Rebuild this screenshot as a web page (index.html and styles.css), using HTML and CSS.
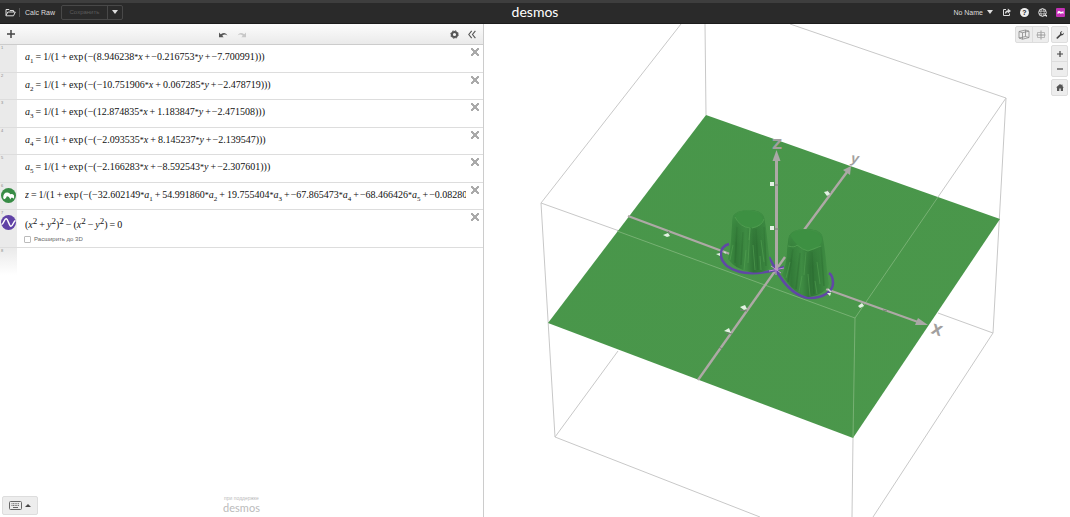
FILE: index.html
```html
<!DOCTYPE html>
<html lang="ru">
<head>
  <meta charset="UTF-8">
  <title>Calc Raw | Desmos</title>
  <link rel="stylesheet" href="styles.css">
</head>
<body>
  <header class="header">
    <div class="header-left">
      <button class="icon-btn" aria-label="Open">
        <svg width="11" height="9" viewBox="0 0 11 9" fill="none" stroke="#ddd" stroke-width="1"><path d="M1 7.5V1.5h3l1 1h3.500v1.500M1 7.500l1.800-3.500h7.500L8.500 7.800H1z"/></svg>
      </button>
      <span class="divider"></span>
      <span class="title">Calc Raw</span>
      <div class="save-group">
        <button class="save" disabled>Сохранить</button>
        <button class="save-more" aria-label="More"><svg width="6" height="4" viewBox="0 0 6 4"><path d="M0 0h6L3 4z" fill="#ddd"/></svg></button>
      </div>
    </div>
    <a class="logo" href="#">desmos</a>
    <div class="header-right">
      <button class="account">No Name <svg width="6" height="4" viewBox="0 0 6 4"><path d="M0 0h6L3 4z" fill="#ddd"/></svg></button>
      <button class="icon-btn" aria-label="Share">
        <svg width="9" height="9" viewBox="0 0 9 9" fill="none" stroke="#ddd"><path d="M4 1.500H1.500v6h6V5.500"/><path d="M3.500 5.500Q3.800 3 6.500 3" stroke-width="1.300"/><path d="M5.800.5L9 3 5.800 5.500z" fill="#ddd" stroke="none"/></svg>
      </button>
      <button class="icon-btn help" aria-label="Help">?</button>
      <button class="icon-btn" aria-label="Language">
        <svg width="9" height="9" viewBox="0 0 9 9" fill="none" stroke="#ddd"><circle cx="4.500" cy="4.500" r="3.800"/><ellipse cx="4.500" cy="4.500" rx="1.700" ry="3.800" stroke-width=".7"/><path d="M1 3.200h7M1 5.800h7" stroke-width=".7"/><path d="M5.500 7h3.500v2z" fill="#ddd" stroke="none"/></svg>
      </button>
      <button class="icon-btn" aria-label="Desmos 3D">
        <svg width="9" height="9" viewBox="0 0 9 9"><rect width="9" height="9" rx="1" fill="#c332b5"/><path d="M1.500 6V4Q2 2.500 4 3.200L5 4 7.500 3.200V6L6 5 5 6 3.500 5z" fill="#fff"/></svg>
      </button>
    </div>
  </header>

  <main class="main">
    <section class="panel">
      <div class="toolbar">
        <button class="icon-btn" aria-label="Add item"><svg width="8" height="8" viewBox="0 0 8 8"><path d="M4 0v8M0 4h8" stroke="#444" stroke-width="1.500"/></svg></button>
        <div class="tools">
          <button class="icon-btn" aria-label="Undo"><svg width="9" height="7" viewBox="0 0 9 7"><path d="M0 1.500V6.200h4.700L3.200 4.700Q5.500 2.500 8.500 4.500 6.500.2 1.700 3.200z" fill="#555"/></svg></button>
          <button class="icon-btn" aria-label="Redo"><svg width="9" height="7" viewBox="0 0 9 7"><path d="M9 1.500V6.200H4.300L5.800 4.700Q3.500 2.500.5 4.500 2.500.2 7.300 3.200z" fill="#c8c8c8"/></svg></button>
        </div>
        <div class="tools">
          <button class="icon-btn" aria-label="Settings"><svg width="9" height="9" viewBox="0 0 9 9" fill="none" stroke="#555"><circle cx="4.500" cy="4.500" r="2.600" stroke-width="2"/><circle cx="4.500" cy="4.500" r="3.800" stroke-width="1" stroke-dasharray="1.500 1.480"/></svg></button>
          <button class="icon-btn" aria-label="Hide list"><svg width="8" height="9" viewBox="0 0 8 9" fill="none" stroke="#555" stroke-width="1.100"><path d="M3.700.8L.8 4.500l2.900 3.700M7.400.8L4.500 4.500l2.900 3.700"/></svg></button>
        </div>
      </div>

      <ol class="list">
        <li class="row">
          <div class="gutter"><span class="num">1</span></div>
          <div class="math"><i>a</i><sub>1</sub><b>=</b>1/(1<b>+</b>exp<s></s>(−(8.946238<em>*</em><i>x</i><b>+</b><u>−</u>0.216753<em>*</em><i>y</i><b>+</b><u>−</u>7.700991)))</div>
          <button class="close" aria-label="Delete"></button>
        </li>
        <li class="row">
          <div class="gutter"><span class="num">2</span></div>
          <div class="math"><i>a</i><sub>2</sub><b>=</b>1/(1<b>+</b>exp<s></s>(−(−10.751906<em>*</em><i>x</i><b>+</b>0.067285<em>*</em><i>y</i><b>+</b><u>−</u>2.478719)))</div>
          <button class="close" aria-label="Delete"></button>
        </li>
        <li class="row">
          <div class="gutter"><span class="num">3</span></div>
          <div class="math"><i>a</i><sub>3</sub><b>=</b>1/(1<b>+</b>exp<s></s>(−(12.874835<em>*</em><i>x</i><b>+</b>1.183847<em>*</em><i>y</i><b>+</b><u>−</u>2.471508)))</div>
          <button class="close" aria-label="Delete"></button>
        </li>
        <li class="row">
          <div class="gutter"><span class="num">4</span></div>
          <div class="math"><i>a</i><sub>4</sub><b>=</b>1/(1<b>+</b>exp<s></s>(−(−2.093535<em>*</em><i>x</i><b>+</b>8.145237<em>*</em><i>y</i><b>+</b><u>−</u>2.139547)))</div>
          <button class="close" aria-label="Delete"></button>
        </li>
        <li class="row">
          <div class="gutter"><span class="num">5</span></div>
          <div class="math"><i>a</i><sub>5</sub><b>=</b>1/(1<b>+</b>exp<s></s>(−(−2.166283<em>*</em><i>x</i><b>+</b><u>−</u>8.592543<em>*</em><i>y</i><b>+</b><u>−</u>2.307601)))</div>
          <button class="close" aria-label="Delete"></button>
        </li>
        <li class="row">
          <div class="gutter"><span class="num">6</span>
            <svg class="swatch" width="15" height="15" viewBox="0 0 14 14"><circle cx="7" cy="7" r="7" fill="#388c46"/><path d="M2 9.500Q2 4 6 4.200q1.800.3 2.800 1.600 2.200-.6 3.400 1.200v3.200Q11 8.500 9.500 9.200L8.800 10.800Q7.500 7.500 5.500 7.600 5 9 3.500 10.500z" fill="#fff"/></svg>
          </div>
          <div class="math"><i>z</i><b>=</b>1/(1<b>+</b>exp<s></s>(−(−32.602149<em>*</em><i>a</i><sub>1</sub><b>+</b>54.991860<em>*</em><i>a</i><sub>2</sub><b>+</b>19.755404<em>*</em><i>a</i><sub>3</sub><b>+</b><u>−</u>67.865473<em>*</em><i>a</i><sub>4</sub><b>+</b><u>−</u>68.466426<em>*</em><i>a</i><sub>5</sub><b>+</b><u>−</u>0.08280)))</div>
          <button class="close" aria-label="Delete"></button>
        </li>
        <li class="row tall">
          <div class="gutter"><span class="num">7</span>
            <svg class="swatch" width="15" height="15" viewBox="0 0 14 14"><circle cx="7" cy="7" r="7" fill="#6042a6"/><path d="M.5 9C2.500 8.500 3 3.500 4.800 3.500S7.500 10.500 9.300 10.500 11.500 6 13.500 5" fill="none" stroke="#fff" stroke-width="1.400"/></svg>
          </div>
          <div class="body">
            <div class="math">(<i>x</i><sup>2</sup><b>+</b><i>y</i><sup>2</sup>)<sup>2</sup><b>−</b>(<i>x</i><sup>2</sup><b>−</b><i>y</i><sup>2</sup>)<b>=</b>0</div>
            <label class="extend"><input type="checkbox">Расширить до 3D</label>
          </div>
          <button class="close" aria-label="Delete"></button>
        </li>
        <li class="row blank">
          <div class="gutter"><span class="num">8</span></div>
        </li>
      </ol>

      <div class="panel-footer">
        <button class="keypad" aria-label="Show keypad">
          <svg width="13" height="9" viewBox="0 0 13 9" fill="none" stroke="#666"><rect x=".5" y=".5" width="12" height="8" rx="1"/><path d="M2.500 2.700h8M2.500 4.500h8" stroke-dasharray="1 .6"/><path d="M4 6.500h5"/></svg>
          <svg width="6" height="3" viewBox="0 0 6 3"><path d="M0 3h6L3 0z" fill="#444"/></svg>
        </button>
        <div class="powered"><small>при поддержке</small><span>desmos</span></div>
      </div>
    </section>

    <section class="graph">
      <svg class="scene" viewBox="484 24 586 493" preserveAspectRatio="xMidYMid slice">
        <defs>
          <linearGradient id="plane" x1="0" y1="0" x2="1" y2="1">
            <stop offset="0" stop-color="#48964a"/>
            <stop offset="1" stop-color="#4b974b"/>
          </linearGradient>
          <linearGradient id="side">
            <stop offset="0" stop-color="#3f8f43"/>
            <stop offset=".2" stop-color="#327a38"/>
            <stop offset=".42" stop-color="#3f8c43"/>
            <stop offset=".6" stop-color="#2f7335"/>
            <stop offset=".82" stop-color="#37813c"/>
            <stop offset="1" stop-color="#439246"/>
          </linearGradient>
          <linearGradient id="fade" x1="0" y1="0" x2="0" y2="1">
            <stop offset="0" stop-color="#429446"/>
            <stop offset=".5" stop-color="#3c8a41" stop-opacity=".4"/>
            <stop offset="1" stop-color="#3c8a41" stop-opacity="0"/>
          </linearGradient>
        </defs>

        <!-- bounding box, behind the surface -->
        <g stroke="#c8c8c8" fill="none">
          <path d="M681 24L541 203L555 437L618 351M541 203L625 233"/>
          <path d="M705 24L706 115M790 24L1006 98L993 333L873 517M993 333L938 313M1006 98L938 197"/>
          <path d="M555 437L760 517M853 438L852 517"/>
        </g>

        <path d="M706 115L1000 219L853 438L548 323z" fill="url(#plane)"/>

        <g stroke="#83b77d" stroke-width=".8" fill="none">
          <path d="M617 231L855 318L938 197M855 318L853 438"/>
        </g>

        <!-- x and y axes -->
        <g stroke="#aea9a6" stroke-width="2.400" fill="none">
          <path d="M628 216L730 254"/>
          <path d="M698 380L785 257"/>
          <path d="M804 230L847 172"/>
          <path d="M826 289L918 322" stroke-width="2"/>
        </g>
        <path d="M851 166L850 175L843 170z" fill="#aaa8a6"/>
        <path d="M928 325L915 325L918 318z" fill="#aaa8a6"/>

        <!-- lemniscate -->
        <path d="M729 244C719 247 718 258 727 266C739 275 755 275 776 270C785 286 796 297 810 298C824 298 833 291 833 283C833 278 832 275 829 273M776 270L769 257M776 270L784 267" fill="none" stroke="#6048a5" stroke-width="2.600"/>

        <!-- left bump -->
        <path d="M733 216Q737 210 749 210Q761 210 764 217C767 230 768 252 771 268Q763 274 750 272Q735 269 728 259C732 245 731 229 733 216z" fill="url(#side)"/>
        <path d="M737 227L735 263M743 232L741 265M756 229L758 270M764 227L766 266" stroke="#25612b" stroke-width="1.500" opacity=".3"/>
        <path d="M750 228L748 263M746 250L744 270M753 245L755 270M761 240L764 262M733 245L730 260M760 256L761 270" stroke="#55a354" stroke-width="1" opacity=".6"/>
        <path d="M733 216Q737 210 749 210Q761 210 764 217L767 244Q750 249 731 240z" fill="url(#fade)"/>
        <path d="M735 216Q740 210 750 211Q761 212 763 219Q763 227 752 228Q740 227 735 216z" fill="#3d9042"/>
        <path d="M735 217Q740 227 750 228L749 240M752 228Q762 226 764 219" fill="none" stroke="#53a053" stroke-width="1" opacity=".8"/>

        <!-- right bump -->
        <path d="M789 236Q793 229 805 229Q819 229 822 235C826 250 826 268 829 284Q825 295 808 297Q793 293 782 275C788 262 786 250 789 236z" fill="url(#side)"/>
        <path d="M793 249L788 282M800 253L796 289M812 252L814 294M821 247L824 286" stroke="#25612b" stroke-width="1.500" opacity=".3"/>
        <path d="M806 252L804 275M790 262L786 278M802 276L799 292M808 274L810 296M817 262L820 284M815 281L817 294" stroke="#55a354" stroke-width="1" opacity=".55"/>
        <path d="M789 236Q793 229 805 229Q819 229 822 235L826 265Q807 270 787 257z" fill="url(#fade)"/>
        <path d="M790 235Q795 230 806 230Q818 231 822 238Q822 249 808 251Q797 248 790 235z" fill="#3d9042"/>
        <path d="M788 246Q795 248 797 245Q803 250 808 251L821 246" fill="none" stroke="#53a053" stroke-width="1" opacity=".8"/>

        <path d="M828 289l3 3M724 252l2 1" stroke="#cdd8cd" stroke-width="1.500"/>

        <!-- z axis -->
        <path d="M776.500 270V160" stroke="#aea9a6" stroke-width="3"/>
        <path d="M776.500 150L780.500 161H772.500z" fill="#aaa8a6"/>
        <path d="M769 271L784 268M771 266L781 273M776 264V275" stroke="#bd8fd0" stroke-width="1"/>

        <!-- tick labels -->
        <g fill="#e3f1e3">
          <path d="M770 182h4v4h-4zM770 226h4v4h-4z"/>
          <path d="M824 192l4-1 2 3-3 2zM663 235l5-2 2 3-3 1z"/>
          <path d="M716 254l4-1v3zM858 306l4-3 2 3-4 2zM827 293l4 0-1 3z"/>
          <path d="M740 307l5-2 2 4-3 1zM724 331l5-3 2 5z"/>
        </g>
        <path d="M774 185h5M774 229h5M827 190l4 3M668 231l2 3M740 310l7 1M726 333l6 1M883 310l4 1M719 347l3 2" stroke="#777f75" stroke-width="1"/>

        <g class="axis-names">
          <text x="777" y="149">Z</text>
          <text x="855" y="163" class="slim" transform="rotate(8 855 158)">y</text>
          <text x="937" y="335" transform="rotate(18 937 330)">X</text>
        </g>
      </svg>

      <div class="controls">
        <div class="group wide">
          <button aria-label="3D view"><svg width="12" height="11" viewBox="0 0 12 11" fill="none" stroke="#888" stroke-width=".8"><path d="M1 2.500L7.500 1 11 2.200V8.500L4.500 10.200 1 9zM1 2.500l3.500 1.200L11 2.200M4.500 3.700v6.500M7.500 1v6.500L1 9M7.500 7.500L11 8.500"/></svg></button>
          <button aria-label="XY view"><svg width="10" height="10" viewBox="0 0 10 10" fill="none" stroke="#888" stroke-width=".8"><path d="M5 .5v9M.5 5h9"/><path d="M1.500 2.500h7v5h-7z" stroke="#aaa"/></svg></button>
        </div>
        <div class="column">
          <div class="group"><button aria-label="Graph settings"><svg width="8" height="8" viewBox="0 0 8 8"><path d="M.5 6.500L4 3.200Q3.500 1 5.500.3L6.500.2 5.200 1.600 5.500 2.700 6.600 2.900 7.800 1.500Q8 4.500 5 4.400L1.700 7.700Q.2 8 .5 6.500z" fill="#444"/></svg></button></div>
          <div class="group">
            <button aria-label="Zoom in"><svg width="6" height="6" viewBox="0 0 6 6"><path d="M3 0v6M0 3h6" stroke="#444" stroke-width="1.200"/></svg></button>
            <button aria-label="Zoom out"><svg width="6" height="6" viewBox="0 0 6 6"><path d="M0 3h6" stroke="#444" stroke-width="1.200"/></svg></button>
          </div>
          <div class="group"><button aria-label="Default view"><svg width="8" height="7" viewBox="0 0 8 7"><path d="M4 0l1.500 1.300V.6h1v1.600L8 3.600H7V7H4.800V4.500H3.300V7H1V3.600H0z" fill="#555"/></svg></button></div>
        </div>
      </div>
    </section>
  </main>
</body>
</html>
```
FILE: styles.css
```css
* {
  box-sizing: border-box;
}
body {
  margin: 0;
  height: 100vh;
  display: flex;
  flex-direction: column;
  overflow: hidden;
  font-family: "Liberation Sans", Arial, sans-serif;
  font-size: 7px;
  background: #fff;
}
button {
  margin: 0;
  padding: 0;
  border: none;
  background: none;
  font: inherit;
  color: inherit;
  cursor: pointer;
  display: flex;
  align-items: center;
  justify-content: center;
}
svg {
  display: block;
}

/* header */
.header {
  flex: none;
  height: 24px;
  display: grid;
  grid-template-columns: 1fr auto 1fr;
  align-items: center;
  padding: 0 5px 2px;
  border-top: 3px solid #3e3e3e;
  border-bottom: 1px solid #1c1c1c;
  background: #2a2a2a;
  color: #ddd;
}
.header-left, .header-right {
  display: flex;
  align-items: center;
}
.header-right {
  justify-content: flex-end;
  gap: 9px;
}
.divider {
  width: 1px;
  height: 9px;
  margin: 0 5px 0 3px;
  background: #555;
}
.save-group {
  display: flex;
  height: 15px;
  margin-left: 6px;
  border: 1px solid #484848;
  border-radius: 2px;
}
.save {
  width: 45px;
  font-size: 6px;
  color: #5c5c5c;
}
.save-more {
  width: 15px;
  border-left: 1px solid #484848;
}
.logo {
  font-family: Lato, sans-serif;
  font-size: 14px;
  line-height: 16px;
  color: #fff;
  text-decoration: none;
}
.account {
  gap: 4px;
}
.help {
  width: 9px;
  height: 9px;
  border-radius: 50%;
  background: #eee;
  color: #222;
  font-weight: bold;
}

/* expression panel */
.main {
  flex: 1;
  min-height: 0;
  display: grid;
  grid-template-columns: 484fr 586fr;
}
.panel {
  min-width: 0;
  display: flex;
  flex-direction: column;
  border-right: 1px solid #ccc;
}
.toolbar {
  height: 21px;
  display: flex;
  justify-content: space-between;
  align-items: center;
  padding: 0 7px;
  border-bottom: 1px solid #ccc;
  background: linear-gradient(#fcfcfc, #eaeaea);
}
.tools {
  display: flex;
  align-items: center;
  gap: 9px;
}
.list {
  flex: 1;
  margin: 0;
  padding: 0;
  list-style: none;
}
.row {
  height: 28px;
  display: flex;
  border-bottom: 1px solid #ddd;
}
.row:nth-child(even) {
  height: 27px;
}
.row.tall {
  height: 38px;
}
.row.blank {
  border: none;
}
.gutter {
  flex: none;
  width: 17px;
  padding: 0 1px;
  background: #eaeaea;
}
.blank .gutter {
  background: linear-gradient(#eaeaea, #fff);
}
.num {
  display: block;
  height: 5px;
  font-size: 4px;
  line-height: 6px;
  color: #888;
}
.math {
  flex: 1;
  min-width: 0;
  margin-left: 8px;
  overflow: hidden;
  white-space: nowrap;
  font-family: "Liberation Serif", "Times New Roman", serif;
  font-size: 10px;
  line-height: 24px;
  color: #111;
}
.math b {
  margin: 0 2px;
  font-weight: normal;
}
.math s {
  margin-left: 1px;
}
.math u {
  margin-left: -1px;
  text-decoration: none;
}
.math em {
  font-size: 8px;
  font-style: normal;
}
.math sub, .math sup {
  font-size: 7px;
  line-height: 0;
}
.math sup {
  font-size: 9px;
}
.body {
  flex: 1;
}
.body .math {
  line-height: 30px;
  height: 25px;
}
.extend {
  display: flex;
  align-items: center;
  gap: 3px;
  margin-left: 7px;
  line-height: 9px;
  font-size: 6px;
  color: #666;
}
.extend input {
  appearance: none;
  width: 7px;
  height: 7px;
  margin: 0;
  border: 1px solid #bbb;
  border-radius: 1px;
}
.close {
  flex: none;
  width: 17px;
  height: 14px;
}
.close::before {
  content: "";
  width: 8px;
  height: 8px;
  background:
    linear-gradient(45deg, transparent 43%, #aaa 43% 57%, transparent 57%),
    linear-gradient(-45deg, transparent 43%, #aaa 43% 57%, transparent 57%);
}
.panel-footer {
  display: grid;
  grid-template-columns: 1fr auto 1fr;
  align-items: end;
  padding: 0 2px 2px;
}
.keypad {
  width: 36px;
  height: 19px;
  gap: 3px;
  border: 1px solid #ddd;
  border-radius: 2px;
  background: #ededed;
}
.powered {
  display: flex;
  flex-direction: column;
  align-items: center;
  color: #bbb;
}
.powered small {
  font-size: 5px;
  line-height: 5px;
}
.powered span {
  font-family: Lato, sans-serif;
  font-size: 11px;
  line-height: 14px;
}

/* 3D graph */
.graph {
  position: relative;
  min-width: 0;
  min-height: 0;
}
.scene {
  width: 100%;
  height: 100%;
}
.axis-names text {
  font-family: "DejaVu Sans", sans-serif;
  font-size: 14px;
  font-weight: bold;
  text-anchor: middle;
  fill: #a29f9e;
}
.axis-names .slim {
  font-family: "Liberation Sans", Arial, sans-serif;
  font-style: italic;
}
.controls {
  position: absolute;
  top: 2px;
  right: 2px;
  display: flex;
  align-items: flex-start;
  gap: 2px;
}
.column {
  display: flex;
  flex-direction: column;
  gap: 2px;
}
.group {
  border: 1px solid #ddd;
  border-radius: 2px;
  background: #ededed;
}
.wide {
  display: flex;
}
.group button {
  width: 15px;
  height: 15px;
}
.wide button {
  width: 16px;
}
.group button + button {
  border-top: 1px solid #ddd;
}
.wide button + button {
  border-top: none;
  border-left: 1px solid #ddd;
}
```
